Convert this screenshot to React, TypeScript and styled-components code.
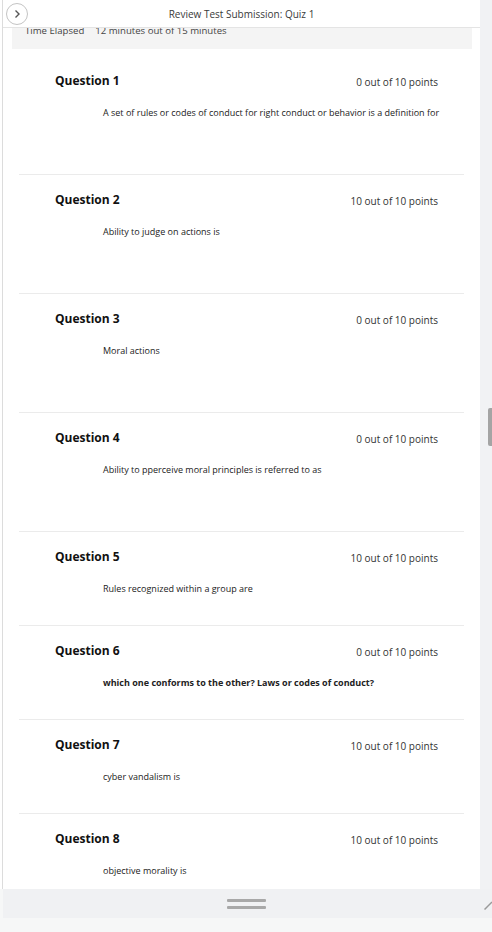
import React from "react";
import styled, { createGlobalStyle } from "styled-components";

const GlobalStyle = createGlobalStyle`
  html, body { margin: 0; padding: 0; }
  body {
    background: #f6f7f7;
    font-family: "Open Sans", "Liberation Sans", sans-serif;
    color: #222;
  }
`;

const Frame = styled.div`
  width: 492px;
  height: 932px;
  display: flex;
  flex-direction: column;
  background: #f6f7f7;
  overflow: hidden;
`;

const Viewport = styled.div`
  height: 889px;
  display: flex;
  background: #ffffff;
`;

const Panel = styled.div`
  width: 477px;
  margin-left: 2px;
  border-left: 1px solid #dcdcdc;
  background: #ffffff;
  display: flex;
  flex-direction: column;
  overflow: hidden;
`;

const Header = styled.header`
  flex: none;
  height: 28px;
  box-sizing: border-box;
  border-bottom: 1px solid #e4e4e4;
  display: grid;
  grid-template-columns: 40px 1fr 40px;
  align-items: center;
  margin-left: -3px;
  padding-left: 3px;
`;

const CircleButton = styled.button`
  width: 22px;
  height: 22px;
  margin-left: 3px;
  padding: 0;
  border-radius: 50%;
  border: 1px solid #c4c4c4;
  background: #fff;
  display: flex;
  align-items: center;
  justify-content: center;
`;

const Title = styled.div`
  text-align: center;
  font-size: 10px;
  color: #3a3a3a;
  margin-top: 1px;
`;

const TimeBox = styled.div`
  flex: none;
  height: 21px;
  margin: 0 8px 0 9px;
  background: #f4f4f4;
  overflow: hidden;
  padding-left: 13px;
  box-sizing: border-box;
`;

const TimeText = styled.div`
  margin-top: -3px;
  font-size: 9.6px;
  line-height: 12px;
  color: #444;
  display: flex;
  gap: 11px;
`;

const QuestionList = styled.div`
  margin: 7px 16px 0 16px;
  display: flex;
  flex-direction: column;
`;

const QuestionBlock = styled.section<{ $tall: boolean; $first: boolean }>`
  border-top: ${(p) => (p.$first ? "none" : "1.5px solid #ebebeb")};
  padding: 17px 26px ${(p) => (p.$tall ? "55px" : "30px")} 36px;
  display: flex;
  flex-direction: column;
  gap: 18px;
`;

const QuestionHead = styled.div`
  display: flex;
  justify-content: space-between;
  align-items: center;
  height: 16px;
`;

const QuestionTitle = styled.h3`
  margin: 0;
  font-size: 12px;
  font-weight: 700;
  color: #111;
  line-height: 16px;
`;

const Points = styled.span`
  font-size: 10px;
  color: #333;
  margin-top: 2px;
`;

const QuestionText = styled.p<{ $bold: boolean }>`
  margin: 0 -20px 0 48px;
  font-size: 9px;
  line-height: 12px;
  white-space: nowrap;
  color: #222;
  font-weight: ${(p) => (p.$bold ? 700 : 400)};
`;

const Gutter = styled.div`
  flex: 1;
  background: #f1f2f4;
  position: relative;
`;

const Thumb = styled.div`
  position: absolute;
  right: 0;
  top: 408px;
  width: 4px;
  height: 38px;
  background: #a4a4a4;
  border-radius: 2px 0 0 2px;
`;

const BottomBar = styled.div`
  height: 29px;
  margin-left: 3px;
  background: #f0f1f3;
  display: flex;
  flex-direction: column;
  align-items: center;
  justify-content: center;
  gap: 4px;
  position: relative;
`;

const HandleLine = styled.div`
  width: 39px;
  height: 3px;
  background: #a8a8a8;
  border-radius: 1px;
  margin-left: -3px;
`;

const ResizeGrip = styled.svg`
  position: absolute;
  right: 0;
  top: 12px;
`;

const questions = [
  { n: 1, pts: "0 out of 10 points", text: "A set of rules or codes of conduct for right conduct or behavior is a definition for", tall: true },
  { n: 2, pts: "10 out of 10 points", text: "Ability to judge on actions is", tall: true },
  { n: 3, pts: "0 out of 10 points", text: "Moral actions", tall: true },
  { n: 4, pts: "0 out of 10 points", text: "Ability to pperceive moral principles is referred to as", tall: true },
  { n: 5, pts: "10 out of 10 points", text: "Rules recognized within a group are", tall: false },
  { n: 6, pts: "0 out of 10 points", text: "which one conforms to the other? Laws or codes of conduct?", tall: false, bold: true },
  { n: 7, pts: "10 out of 10 points", text: "cyber vandalism is", tall: false },
  { n: 8, pts: "10 out of 10 points", text: "objective morality is", tall: false },
];

export default function App() {
  return (
    <>
      <GlobalStyle />
      <Frame>
        <Viewport>
          <Panel>
            <Header>
              <CircleButton aria-label="Open menu">
                <svg width="8" height="10" viewBox="0 0 8 10">
                  <path d="M2.5 1.5 L6 5 L2.5 8.5" fill="none" stroke="#555" strokeWidth="1.4" />
                </svg>
              </CircleButton>
              <Title>Review Test Submission: Quiz 1</Title>
              <span />
            </Header>
            <TimeBox>
              <TimeText>
                <span>Time Elapsed</span>
                <span>12 minutes out of 15 minutes</span>
              </TimeText>
            </TimeBox>
            <QuestionList>
              {questions.map((q, i) => (
                <QuestionBlock key={q.n} $tall={q.tall} $first={i === 0}>
                  <QuestionHead>
                    <QuestionTitle>Question {q.n}</QuestionTitle>
                    <Points>{q.pts}</Points>
                  </QuestionHead>
                  <QuestionText $bold={!!q.bold}>{q.text}</QuestionText>
                </QuestionBlock>
              ))}
            </QuestionList>
          </Panel>
          <Gutter>
            <Thumb />
          </Gutter>
        </Viewport>
        <BottomBar>
          <HandleLine />
          <HandleLine />
          <ResizeGrip width="8" height="9" viewBox="0 0 8 9">
            <path d="M0.5 8.5 L8 1" stroke="#9a9a9a" strokeWidth="1.5" />
          </ResizeGrip>
        </BottomBar>
      </Frame>
    </>
  );
}
